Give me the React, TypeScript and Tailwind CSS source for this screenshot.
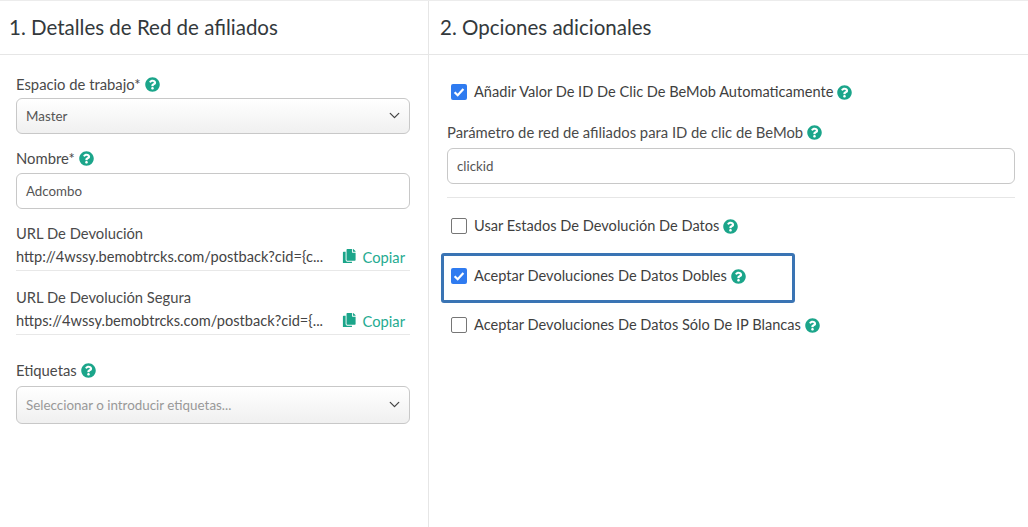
import { ChevronDown } from "lucide-react"
import { FaCopy, FaQuestionCircle } from "react-icons/fa"

function Help({ className = "" }: { className?: string }) {
  return <FaQuestionCircle className={`text-[15px] text-[#1ba58a] shrink-0 ${className}`} />
}

function Label({ text }: { text: string }) {
  return (
    <div className="flex items-center gap-[4px] h-[20px] text-[14.8px] text-[#4a4a4a]">
      <span>{text}</span>
      <Help />
    </div>
  )
}

function SelectBox({ value, placeholder }: { value: string; placeholder?: boolean }) {
  return (
    <div className="flex items-center justify-between h-full pl-[9px] pr-[6px] pt-[1px] rounded-[6px] border border-[#c8c8c8] bg-gradient-to-b from-white to-[#f0f0f0] text-[13.4px]">
      <span className={placeholder ? "text-[#999999]" : "text-[#555555]"}>{value}</span>
      <ChevronDown size={17} strokeWidth={1.8} className="text-[#444444] -mt-[2px]" />
    </div>
  )
}

function TextBox({ value }: { value: string }) {
  return (
    <div className="flex items-center h-[36px] pl-[9px] pt-[1px] rounded-[6px] border border-[#c8c8c8] bg-white text-[13.3px] text-[#555555]">
      {value}
    </div>
  )
}

function UrlRow({ label, url }: { label: string; url: string }) {
  return (
    <div>
      <div className="h-[20px] flex items-center text-[14.75px] text-[#4a4a4a]">{label}</div>
      <div className="flex items-center justify-between h-[27px] mt-[1px] border-b border-[#e8e8e8] pr-[5px]">
        <span className="text-[14.6px] text-[#444444]">{url}</span>
        <span className="flex items-center gap-[6px] text-[14.7px] text-[#25ab91]">
          <FaCopy className="text-[14.5px] text-[#1ba58a] -mt-[2px]" />
          Copiar
        </span>
      </div>
    </div>
  )
}

function Check({ label, checked }: { label: string; checked?: boolean }) {
  return (
    <div className="flex items-center gap-[7px] h-[20px] pl-[4px] text-[14.6px] text-[#3f3f3f]">
      {checked ? (
        <span className="flex items-center justify-center w-[16px] h-[16px] rounded-[2px] bg-[#2f7bf0]">
          <svg width="12" height="12" viewBox="0 0 12 12" fill="none">
            <path d="M1.6 6.2 4.7 9.2 10.4 3" stroke="white" strokeWidth="2.2" />
          </svg>
        </span>
      ) : (
        <span className="w-[16px] h-[16px] rounded-[2px] border-[1.5px] border-[#767676] bg-white" />
      )}
      <span>{label}</span>
      <Help className="-ml-[3px] text-[14.5px]" />
    </div>
  )
}

export default function App() {
  return (
    <div className="relative flex w-[1028px] h-[527px] overflow-hidden bg-white border-t border-[#ececec] font-['Lato',sans-serif]">
      {/* affiliate network details */}
      <div className="w-[429px] shrink-0 border-r border-[#e6e6e6]">
        <div className="flex items-center h-[54px] pl-[9px] border-b border-[#e6e6e6] text-[20.5px] text-[#33393c]">
          1. Detalles de Red de afiliados
        </div>
        <div className="pl-[16px] pr-[18px] pt-[19px]">
          <Label text="Espacio de trabajo*" />
          <div className="mt-[4px] h-[36px]">
            <SelectBox value="Master" />
          </div>
          <div className="mt-[14px]">
            <Label text="Nombre*" />
          </div>
          <div className="mt-[5px]">
            <TextBox value="Adcombo" />
          </div>
          <div className="mt-[14px]">
            <UrlRow label="URL De Devolución" url="http://4wssy.bemobtrcks.com/postback?cid={c..." />
          </div>
          <div className="mt-[16px]">
            <UrlRow label="URL De Devolución Segura" url="https://4wssy.bemobtrcks.com/postback?cid={..." />
          </div>
          <div className="mt-[25px]">
            <Label text="Etiquetas" />
          </div>
          <div className="mt-[6px] h-[38px]">
            <SelectBox value="Seleccionar o introducir etiquetas..." placeholder />
          </div>
        </div>
      </div>

      {/* additional options */}
      <div className="flex-1">
        <div className="flex items-center h-[54px] pl-[11px] border-b border-[#e6e6e6] text-[20.5px] text-[#33393c]">
          2. Opciones adicionales
        </div>
        <div className="pl-[18px] pr-[13px] pt-[27px]">
          <Check label="Añadir Valor De ID De Clic De BeMob Automaticamente" checked />
          <div className="mt-[20px]">
            <Label text="Parámetro de red de afiliados para ID de clic de BeMob" />
          </div>
          <div className="mt-[6px]">
            <TextBox value="clickid" />
          </div>
          <div className="mt-[13px] border-t border-[#e6e6e6]" />
          <div className="mt-[18px]">
            <Check label="Usar Estados De Devolución De Datos" />
          </div>
          <div className="mt-[30px]">
            <Check label="Aceptar Devoluciones De Datos Dobles" checked />
          </div>
          <div className="mt-[29px]">
            <Check label="Aceptar Devoluciones De Datos Sólo De IP Blancas" />
          </div>
        </div>
      </div>

      {/* highlight frame */}
      <div className="absolute left-[441px] top-[252px] w-[354px] h-[50px] rounded-[3px] border-[3px] border-[#3a74b4]" />
    </div>
  )
}
